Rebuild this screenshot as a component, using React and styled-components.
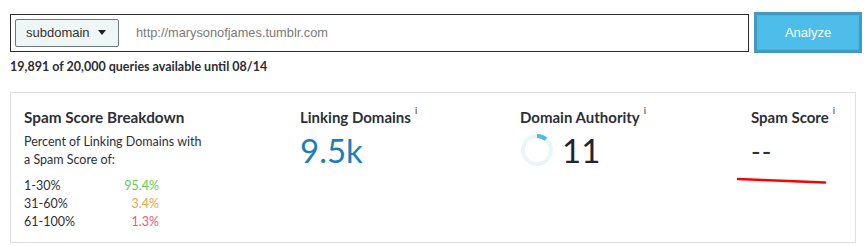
import React from "react";
import styled, { createGlobalStyle } from "styled-components";

const Global = createGlobalStyle`
  html, body { margin: 0; padding: 0; background: #fff; }
  body { font-family: Lato, "Open Sans", sans-serif; color: #2c3038; }
`;

const Page = styled.div`
  width: 867px;
  height: 246px;
  padding: 12px 0 0 10px;
  box-sizing: border-box;
  overflow: hidden;
`;

const SearchRow = styled.div`
  display: flex;
  align-items: center;
  gap: 5px;
`;

const InputBox = styled.div`
  width: 739px;
  height: 38px;
  box-sizing: border-box;
  border: 1.5px solid #2a2a32;
  display: flex;
  align-items: center;
  padding-left: 4px;
  gap: 17px;
`;

const Select = styled.div`
  width: 104px;
  height: 28px;
  box-sizing: border-box;
  border: 1px solid #6c7878;
  border-radius: 2px;
  background: #eef6f6;
  display: flex;
  align-items: center;
  justify-content: space-between;
  padding: 0 12px 0 10px;
  font-family: "Liberation Sans", Arial, sans-serif;
  font-size: 13px;
  color: #333;
`;

const Caret = styled.span`
  width: 0;
  height: 0;
  border-left: 4.5px solid transparent;
  border-right: 4.5px solid transparent;
  border-top: 5px solid #222;
`;

const Url = styled.span`
  font-family: "Liberation Sans", Arial, sans-serif;
  font-size: 12.8px;
  color: #7a7a7a;
`;

const AnalyzeButton = styled.button`
  width: 108px;
  height: 41px;
  box-sizing: border-box;
  border: 3px solid #4299c1;
  background: #4dbde9;
  border-radius: 0;
  box-shadow: inset 0 0 0 1px #4ab5e0;
  color: #fff;
  font-family: "Liberation Sans", Arial, sans-serif;
  font-size: 13px;
  padding: 0;
  cursor: pointer;
`;

const Quota = styled.div`
  margin-top: 6px;
  font-size: 12.5px;
  font-weight: 700;
  color: #2a2e35;
  line-height: 16px;
`;

const Panel = styled.section`
  margin-top: 17px;
  width: 846px;
  height: 151px;
  box-sizing: border-box;
  border: 1px solid #dcdfe0;
  display: flex;
  padding: 14px 0 0 13px;
`;

const Column = styled.div`
  width: ${(p) => p.$w}px;
  flex: none;
  display: flex;
  flex-direction: column;
`;

const Title = styled.h3`
  margin: 0;
  font-size: 15.3px;
  font-weight: 700;
  line-height: 20px;
  color: #2c3038;
`;

const Label = styled.h4`
  margin: 0;
  font-size: 15px;
  font-weight: 700;
  line-height: 20px;
  color: #2c3038;
  display: flex;
  align-items: flex-start;
`;

const Info = styled.sup`
  font-size: 9px;
  font-weight: 700;
  color: #666;
  margin-left: 4px;
  line-height: 10px;
  position: relative;
  top: -1px;
`;

const Desc = styled.p`
  margin: 6px 0 0;
  font-size: 12.5px;
  line-height: 18px;
  color: #2c3038;
`;

const Rows = styled.div`
  margin-top: 8px;
  display: grid;
  grid-template-columns: 80px 55px;
  font-size: 12.5px;
  line-height: 18px;
`;

const Range = styled.span`
  color: #2c3038;
`;

const Pct = styled.span`
  text-align: right;
  color: ${(p) => p.$c};
`;

const Big = styled.div`
  font-size: 33px;
  line-height: 40px;
  margin-top: 3px;
  color: ${(p) => p.$c || "#1f2530"};
  display: flex;
  align-items: center;
  gap: 8px;
`;

const Dash = styled.div`
  font-size: 26px;
  line-height: 36px;
  margin-top: 6px;
  color: #2c3038;
  letter-spacing: 1px;
`;

const Underline = styled.svg`
  position: absolute;
  left: -14px;
  top: 70px;
`;

const Rel = styled.div`
  position: relative;
`;

function Ring() {
  const r = 14;
  const c = 2 * Math.PI * r;
  const frac = 0.11;
  return (
    <svg width="34" height="34" viewBox="0 0 34 34">
      <circle cx="17" cy="17" r={r} fill="none" stroke="#e9f5f7" strokeWidth="4" />
      <circle
        cx="17"
        cy="17"
        r={r}
        fill="none"
        stroke="#4db8e6"
        strokeWidth="4"
        strokeDasharray={`${c * frac} ${c}`}
        transform="rotate(-90 17 17)"
      />
    </svg>
  );
}

export default function App() {
  return (
    <>
      <Global />
      <Page>
        <SearchRow>
          <InputBox>
            <Select>
              subdomain <Caret />
            </Select>
            <Url>http://marysonofjames.tumblr.com</Url>
          </InputBox>
          <AnalyzeButton>Analyze</AnalyzeButton>
        </SearchRow>
        <Quota>19,891 of 20,000 queries available until 08/14</Quota>
        <Panel>
          <Column $w={276}>
            <Title>Spam Score Breakdown</Title>
            <Desc>
              Percent of Linking Domains with
              <br />a Spam Score of:
            </Desc>
            <Rows>
              <Range>1-30%</Range>
              <Pct $c="#62c94f">95.4%</Pct>
              <Range>31-60%</Range>
              <Pct $c="#f6a04a">3.4%</Pct>
              <Range>61-100%</Range>
              <Pct $c="#f2557a">1.3%</Pct>
            </Rows>
          </Column>
          <Column $w={220}>
            <Label>
              Linking Domains<Info>i</Info>
            </Label>
            <Big $c="#1a7fb8">9.5k</Big>
          </Column>
          <Column $w={231}>
            <Label>
              Domain Authority<Info>i</Info>
            </Label>
            <Big>
              <Ring />
              11
            </Big>
          </Column>
          <Column $w={100}>
            <Rel>
              <Label>
                Spam Score<Info>i</Info>
              </Label>
              <Dash>--</Dash>
              <Underline width="92" height="8" viewBox="0 0 92 8">
                <path d="M1 2 L88 5.5" stroke="#f00" strokeWidth="2.6" strokeLinecap="round" fill="none" />
              </Underline>
            </Rel>
          </Column>
        </Panel>
      </Page>
    </>
  );
}
